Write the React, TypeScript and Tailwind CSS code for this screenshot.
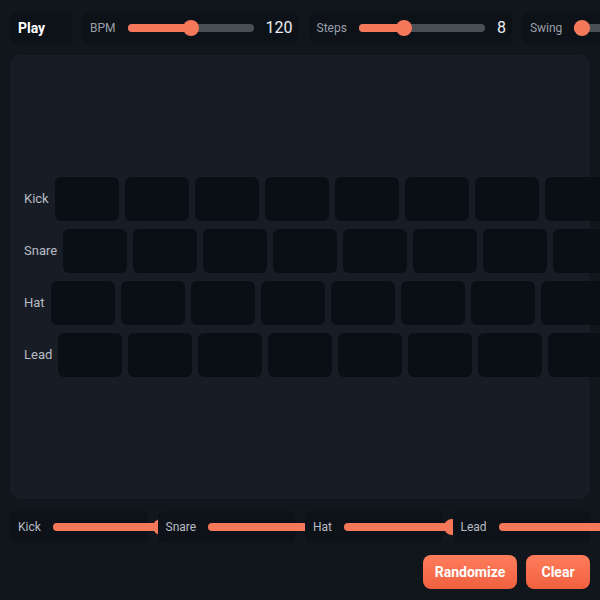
import React from "react";

function TopSlider({ pct }: { pct: number }) {
  const left = 8 + pct * (126 - 16);
  return (
    <div className="relative w-[126px] h-2 shrink-0 rounded-full bg-[#4a4e55]">
      <div
        className="absolute left-0 top-0 h-full rounded-full bg-[#f5785a]"
        style={{ width: `${left}px` }}
      />
      <div
        className="absolute top-1/2 w-4 h-4 -translate-x-1/2 -translate-y-1/2 rounded-full bg-[#f5785a]"
        style={{ left: `${left}px` }}
      />
    </div>
  );
}

function TopBox({ label, pct, value }: { label: string; pct: number; value?: string }) {
  return (
    <div className="h-[30px] shrink-0 flex items-center gap-3 pl-2 pr-1.5 rounded-md bg-[#0d1118]">
      <span className="text-[12px] text-[#9aa0a9]">{label}</span>
      <TopSlider pct={pct} />
      {value !== undefined && <span className="text-[16px] text-[#eceef1]">{value}</span>}
    </div>
  );
}

function MixBox({ label }: { label: string }) {
  return (
    <div className="relative h-[32px] min-w-0 flex items-center gap-3 px-2 rounded-md bg-[#0d1118]">
      <span className="text-[12px] text-[#b9bdc5] shrink-0">{label}</span>
      <div className="relative w-[116px] h-2 shrink-0 rounded-full bg-[#f5785a]">
        <div className="absolute top-1/2 left-[108px] w-4 h-4 -translate-x-1/2 -translate-y-1/2 rounded-full bg-[#f5785a]" />
      </div>
    </div>
  );
}

const tracks = ["Kick", "Snare", "Hat", "Lead"];

export default function App() {
  return (
    <div
      className="w-[600px] h-[600px] overflow-hidden bg-[#11151c] flex flex-col px-[10px] pt-[13px] pb-[11px] gap-[12px]"
      style={{ fontFamily: "Roboto, 'Noto Sans', sans-serif" }}
    >
      <div className="flex items-center gap-[10px] h-[30px] shrink-0">
        <div className="h-[30px] w-[62px] shrink-0 flex items-center pl-2 rounded-md bg-[#0d1118]">
          <span className="text-[14px] font-bold text-white">Play</span>
        </div>
        <TopBox label="BPM" pct={0.5} value="120" />
        <TopBox label="Steps" pct={1 / 3} value="8" />
        <TopBox label="Swing" pct={0} />
      </div>

      <div className="flex-1 rounded-[10px] bg-[#181c25] flex flex-col justify-center gap-2 pl-[14px]">
        {tracks.map((t) => (
          <div key={t} className="flex items-center gap-[6px]">
            <span className="text-[13px] text-[#b9bdc5] shrink-0">{t}</span>
            {Array.from({ length: 8 }).map((_, i) => (
              <div key={i} className="w-[64px] h-[44px] shrink-0 rounded-md bg-[#0a0e15]" />
            ))}
          </div>
        ))}
      </div>

      <div className="grid grid-cols-4 gap-[10px] shrink-0">
        {tracks.map((t) => (
          <MixBox key={t} label={t} />
        ))}
      </div>

      <div className="flex justify-end gap-[9px] shrink-0">
        <button className="h-[34px] w-[94px] rounded-lg bg-gradient-to-b from-[#ff7d5c] to-[#f0603f] text-white text-[14px] font-bold">
          Randomize
        </button>
        <button className="h-[34px] w-[64px] rounded-lg bg-gradient-to-b from-[#ff7d5c] to-[#f0603f] text-white text-[14px] font-bold">
          Clear
        </button>
      </div>
    </div>
  );
}
